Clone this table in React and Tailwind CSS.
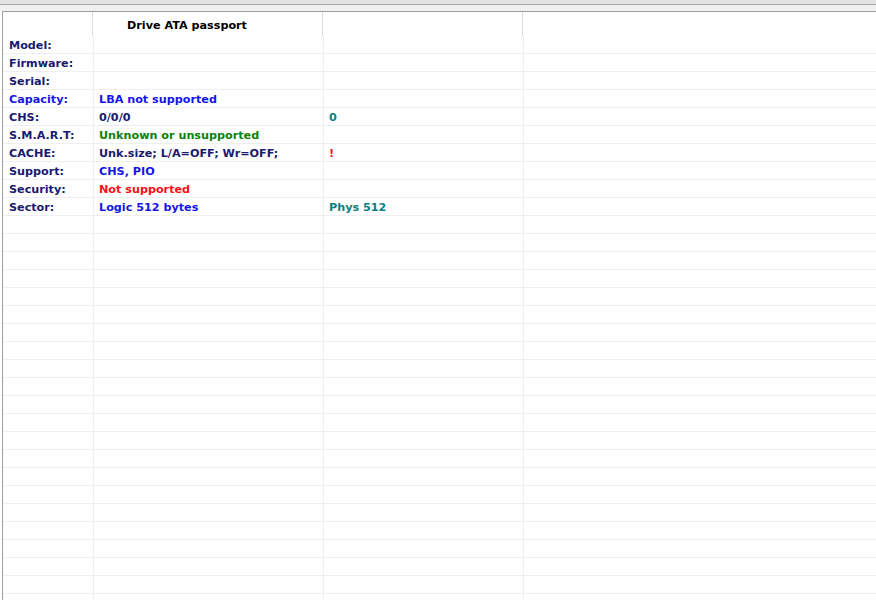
import React from "react";

const rows = [
  { l: "Model:", lc: "text-[#1a1a6e]" },
  { l: "Firmware:", lc: "text-[#1a1a6e]" },
  { l: "Serial:", lc: "text-[#1a1a6e]" },
  { l: "Capacity:", lc: "text-[#1515e6]", v: "LBA not supported", vc: "text-[#1515e6]" },
  { l: "CHS:", lc: "text-[#1a1a6e]", v: "0/0/0", vc: "text-[#1a1a6e]", w: "0", wc: "text-[#0a8080]" },
  { l: "S.M.A.R.T:", lc: "text-[#1a1a6e]", v: "Unknown or unsupported", vc: "text-[#0a820a]" },
  { l: "CACHE:", lc: "text-[#1a1a6e]", v: "Unk.size; L/A=OFF; Wr=OFF;", vc: "text-[#1a1a6e]", w: "!", wc: "text-[#ff1010]" },
  { l: "Support:", lc: "text-[#1a1a6e]", v: "CHS, PIO", vc: "text-[#1515e6]" },
  { l: "Security:", lc: "text-[#1a1a6e]", v: "Not supported", vc: "text-[#ff1010]" },
  { l: "Sector:", lc: "text-[#1a1a6e]", v: "Logic 512 bytes", vc: "text-[#1515e6]", w: "Phys 512", wc: "text-[#0a8080]" },
];

export default function App() {
  const all = [...rows];
  while (all.length < 32) all.push({});
  return (
    <div
      className="w-[876px] h-[600px] overflow-hidden bg-white flex flex-col text-[11.2px] font-bold"
      style={{ fontFamily: '"DejaVu Sans", Verdana, sans-serif' }}
    >
      <div className="h-[4px] bg-[#e3e3e3] shrink-0" />
      <div className="h-px bg-[#a8a8a8] shrink-0" />
      <div className="h-[6px] bg-[#f0f0f0] shrink-0" />
      <div className="flex-1 ml-[2px] border-l border-t border-[#a0a0a0] flex flex-col overflow-hidden">
        <div className="grid grid-cols-[90px_230px_200px_1fr] h-[24px] shrink-0">
          <div className="border-r border-[#dcdcdc]" />
          <div className="border-r border-[#dcdcdc] pl-[34px] pt-[4px] flex items-center text-black">Drive ATA passport</div>
          <div className="border-r border-[#dcdcdc]" />
          <div />
        </div>
        {all.map((r, i) => (
          <div key={i} className="grid grid-cols-[91px_230px_200px_1fr] h-[18px] shrink-0 border-b border-[#efefef]">
            <div className={`border-r border-[#efefef] pl-[6px] pt-[2px] flex items-center whitespace-nowrap ${r.lc || ""}`}>{r.l}</div>
            <div className={`border-r border-[#efefef] pl-[5px] pt-[2px] flex items-center whitespace-nowrap ${r.vc || ""}`}>{r.v}</div>
            <div className={`border-r border-[#efefef] pl-[5px] pt-[2px] flex items-center whitespace-nowrap ${r.wc || ""}`}>{r.w}</div>
            <div />
          </div>
        ))}
      </div>
    </div>
  );
}
